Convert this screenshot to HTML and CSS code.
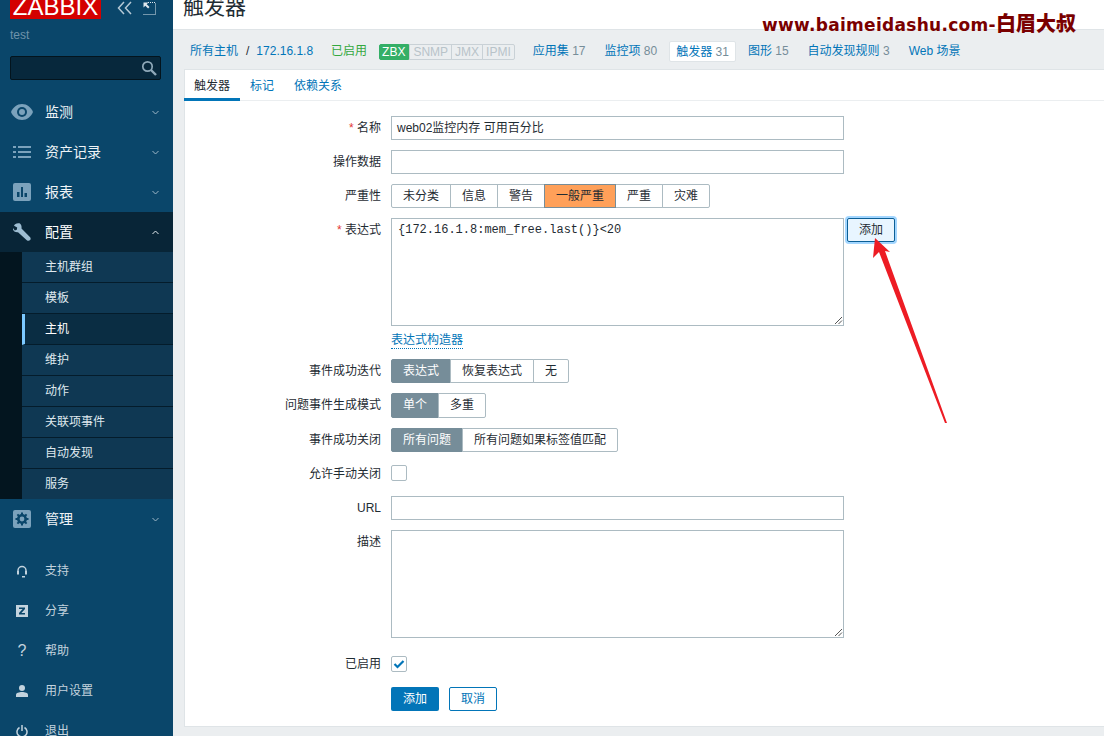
FILE: index.html
```html
<!DOCTYPE html>
<html lang="zh">
<head>
<meta charset="utf-8">
<title>触发器</title>
<link rel="stylesheet" href="styles.css">
</head>
<body>
<aside class="sidebar">
  <div class="brand">
    <div class="logo">ZABBIX</div>
    <svg class="ctl ctl-a" width="16" height="14" viewBox="0 0 16 14"><path d="M7 1 1.500 7 7 13M14 1 8.500 7 14 13" fill="none" stroke="#b5c9d6" stroke-width="1.500"/></svg>
    <svg class="ctl ctl-b" width="13" height="13" viewBox="0 0 13 13"><path d="M.5 12.500h12V.5" fill="none" stroke="#dfe8ee" stroke-dasharray="1 1"/><path d="M5 .5h7.500" stroke="#dfe8ee" stroke-dasharray="1 1"/><path d="M.5 .5h5l-1.800 1.800 2.800 2.800-1.400 1.400-2.800-2.800L.5 5.500z" fill="#dfe8ee"/></svg>
  </div>
  <div class="user">test</div>
  <div class="search">
    <svg width="16" height="16" viewBox="0 0 16 16"><circle cx="6.500" cy="6.500" r="4.700" fill="none" stroke="#8fa9b9" stroke-width="1.700"/><path d="m10 10 5 5" stroke="#8fa9b9" stroke-width="2.400"/></svg>
  </div>
  <nav class="menu">
    <div class="mi">
      <span class="ico"><svg width="22" height="16" viewBox="0 0 22 16"><path d="M11 0C6 0 2 3.500 0 8c2 4.500 6 8 11 8s9-3.500 11-8c-2-4.500-6-8-11-8z" fill="#7ba2bc"/><circle cx="11" cy="8" r="5" fill="#0a466a"/><circle cx="11" cy="8" r="3" fill="#7ba2bc"/></svg></span>
      <span class="ml">监测</span><svg class="chev" width="7" height="5" viewBox="0 0 7 5"><path d="m.5 1 3 3 3-3" fill="none" stroke="#9db6c6"/></svg>
    </div>
    <div class="mi">
      <span class="ico"><svg width="18" height="12" viewBox="0 0 18 12"><path d="M0 0h3v2H0zM5 0h13v2H5zM0 5h3v2H0zM5 5h13v2H5zM0 10h3v2H0zM5 10h13v2H5z" fill="#7ba2bc"/></svg></span>
      <span class="ml">资产记录</span><svg class="chev" width="7" height="5" viewBox="0 0 7 5"><path d="m.5 1 3 3 3-3" fill="none" stroke="#9db6c6"/></svg>
    </div>
    <div class="mi">
      <span class="ico"><svg width="18" height="18" viewBox="0 0 18 18"><rect width="18" height="18" rx="2" fill="#7ba2bc"/><path d="M4 9h2.500v5H4zM8 4h2v10H8zM11.500 10H14v4h-2.500z" fill="#0a466a"/></svg></span>
      <span class="ml">报表</span><svg class="chev" width="7" height="5" viewBox="0 0 7 5"><path d="m.5 1 3 3 3-3" fill="none" stroke="#9db6c6"/></svg>
    </div>
    <div class="mi mi-open">
      <span class="ico"><svg width="18" height="18" viewBox="0 0 18 18"><path d="M6.500.3C3.800-.3 1.600 1 1 2.700l3.200 1.900-.4 2.100-2 .9L0 5C-.5 7.500 1.500 9.500 5 9.200l8.800 8c1 .9 2.400.9 3.300-.1.800-.9.800-2.200-.2-3.100L8.500 5.500C8.800 3.300 8.300 1.200 6.500.3z" fill="#9dbdd2"/></svg></span>
      <span class="ml">配置</span><svg class="chev" width="7" height="5" viewBox="0 0 7 5"><path d="m.5 4 3-3 3 3" fill="none" stroke="#e4ecf1"/></svg>
    </div>
    <ul class="sub">
      <li>主机群组</li>
      <li>模板</li>
      <li class="on">主机</li>
      <li>维护</li>
      <li>动作</li>
      <li>关联项事件</li>
      <li>自动发现</li>
      <li>服务</li>
    </ul>
    <div class="mi">
      <span class="ico"><svg width="18" height="18" viewBox="0 0 18 18"><rect width="18" height="18" rx="2" fill="#7ba2bc"/><circle cx="9" cy="9" r="3.700" fill="none" stroke="#0a466a" stroke-width="2.600"/><path d="M9 2.500v2.500M9 13v2.500M2.500 9H5M13 9h2.500M4.400 4.400l1.800 1.800M11.800 11.800l1.800 1.800M13.600 4.400l-1.800 1.800M6.200 11.800l-1.800 1.800" stroke="#0a466a" stroke-width="2"/></svg></span>
      <span class="ml">管理</span><svg class="chev" width="7" height="5" viewBox="0 0 7 5"><path d="m.5 1 3 3 3-3" fill="none" stroke="#9db6c6"/></svg>
    </div>
  </nav>
  <div class="foot">
    <div class="fi"><span class="ico"><svg width="12" height="13" viewBox="0 0 12 13"><path d="M2 8V5.500a4 4 0 0 1 8 0V8" fill="none" stroke="#c3d3de" stroke-width="1.500"/><path d="M1 6h2v3.500H1zM9 6h2v3.500H9zM6 11h3v1.500H6z" fill="#c3d3de"/></svg></span>支持</div>
    <div class="fi"><span class="ico"><svg width="12" height="12" viewBox="0 0 12 12"><path fill-rule="evenodd" d="M0 0h12v12H0zM3 2.500V4h3.600L3 8v1.500h6V8H5.400L9 4V2.500z" fill="#c3d3de"/></svg></span>分享</div>
    <div class="fi"><span class="ico q">?</span>帮助</div>
    <div class="fi"><span class="ico"><svg width="12" height="12" viewBox="0 0 12 12"><circle cx="6" cy="3" r="3" fill="#c3d3de"/><path d="M0 12V9.800C0 8 3 7 6 7s6 1 6 2.800V12z" fill="#c3d3de"/></svg></span>用户设置</div>
    <div class="fi"><span class="ico"><svg width="12" height="13" viewBox="0 0 12 13"><path d="M3.500 2.500a5 5 0 1 0 5 0" fill="none" stroke="#c3d3de" stroke-width="1.500"/><path d="M6 0v6" stroke="#c3d3de" stroke-width="1.500"/></svg></span>退出</div>
  </div>
</aside>

<main class="main">
  <header class="head"><h1>触发器</h1></header>
  <div class="hostnav">
    <a class="crumb">所有主机</a><span class="sep">/</span><a class="crumb">172.16.1.8</a>
    <span class="status">已启用</span>
    <span class="avail"><b class="zbx">ZBX</b><i>SNMP</i><i>JMX</i><i>IPMI</i></span>
    <a class="hn hn-first">应用集 <em>17</em></a>
    <a class="hn">监控项 <em>80</em></a>
    <a class="hn hn-on">触发器 <em>31</em></a>
    <a class="hn">图形 <em>15</em></a>
    <a class="hn">自动发现规则 <em>3</em></a>
    <a class="hn">Web 场景</a>
  </div>
  <section class="card">
    <div class="tabs">
      <a class="tab tab-on">触发器</a>
      <a class="tab">标记</a>
      <a class="tab">依赖关系</a>
    </div>
    <form class="form">
      <label class="lb"><s>*</s> 名称</label>
      <div class="fd"><div class="inp">web02监控内存 可用百分比</div></div>

      <label class="lb">操作数据</label>
      <div class="fd"><div class="inp"></div></div>

      <label class="lb">严重性</label>
      <div class="fd"><div class="seg">
        <span>未分类</span><span>信息</span><span>警告</span><span class="sev">一般严重</span><span>严重</span><span>灾难</span>
      </div></div>

      <label class="lb"><s>*</s> 表达式</label>
      <div class="fd">
        <div class="expr-row">
          <div class="area mono">{172.16.1.8:mem_free.last()}&lt;20<svg class="grip" width="9" height="9" viewBox="0 0 9 9"><path d="M1 8 8 1M4.500 8 8 4.500" stroke="#555" fill="none"/></svg></div>
          <span class="btn-focus">添加</span>
        </div>
        <a class="builder">表达式构造器</a>
      </div>

      <label class="lb">事件成功迭代</label>
      <div class="fd"><div class="seg">
        <span class="sel">表达式</span><span>恢复表达式</span><span>无</span>
      </div></div>

      <label class="lb">问题事件生成模式</label>
      <div class="fd"><div class="seg seg-tall">
        <span class="sel">单个</span><span>多重</span>
      </div></div>

      <label class="lb">事件成功关闭</label>
      <div class="fd"><div class="seg">
        <span class="sel">所有问题</span><span>所有问题如果标签值匹配</span>
      </div></div>

      <label class="lb">允许手动关闭</label>
      <div class="fd fd-check"><span class="check"></span></div>

      <label class="lb">URL</label>
      <div class="fd"><div class="inp"></div></div>

      <label class="lb">描述</label>
      <div class="fd"><div class="area"><svg class="grip" width="9" height="9" viewBox="0 0 9 9"><path d="M1 8 8 1M4.500 8 8 4.500" stroke="#555" fill="none"/></svg></div></div>

      <label class="lb lb-en">已启用</label>
      <div class="fd fd-en"><span class="check"><svg width="14" height="14" viewBox="0 0 14 14"><path d="m2.500 7 3 3 6-6" fill="none" stroke="#0275b8" stroke-width="2.200"/></svg></span></div>

      <span></span>
      <div class="fd actions"><span class="btn">添加</span><span class="btn btn-alt">取消</span></div>
    </form>
  </section>
</main>

<div class="mark">www.baimeidashu.com-<span>白眉大叔</span></div>
<svg class="arrow" width="1104" height="736" viewBox="0 0 1104 736"><polygon points="875,238 890,252 885,251 947,423 945,423 879,252 873,258" fill="#ed1c24"/></svg>
</body>
</html>
```
FILE: styles.css
```css
* { box-sizing: border-box; }
html, body { margin: 0; padding: 0; height: 736px; overflow: hidden; }
body {
  display: flex;
  position: relative;
  background: #ebeef0;
  color: #1f2c33;
  font: 12px/16px "Liberation Sans", "Noto Sans CJK SC", sans-serif;
}

/* sidebar */
.sidebar { width: 173px; flex: none; height: 736px; background: #0a466a; overflow: hidden; }
.brand { display: flex; height: 19px; padding-left: 10px; }
.logo {
  width: 91px; height: 19px; overflow: hidden; background: #d40000; color: #fff;
  font-size: 24px; line-height: 13px; letter-spacing: 0; text-align: center;
}
.ctl { flex: none; }
.ctl-a { margin: 1px 0 0 16px; }
.ctl-b { margin: 2px 0 0 10px; }
.user { margin: 8px 0 0 10px; color: #6f93ab; height: 16px; }
.search {
  display: flex; align-items: center; justify-content: flex-end;
  width: 151px; height: 24px; margin: 13px 0 12px 10px; padding-right: 3px;
  background: #07283c; border: 1px solid #03141d; border-radius: 2px;
}
.menu { display: block; }
.mi { display: flex; align-items: center; height: 40px; padding: 0 14px 0 11px; color: #eef3f6; font-size: 14px; }
.mi-open { background: #082537; color: #fff; }
.ico { display: flex; align-items: center; justify-content: center; flex: none; width: 22px; margin-right: 12px; }
.ml { flex: 1; }
.chev { flex: none; }
.sub { list-style: none; margin: 0; padding: 0 0 0 22px; background: #03151f; height: 247px; color: #dfe8ee; }
.sub li { height: 31px; line-height: 29px; padding: 1px 0 0 23px; background: #0f3853; border-bottom: 1px solid #041c2b; }
.sub li:last-child { height: 30px; border-bottom: 0; }
.sub li.on { padding-left: 20px; border-left: 3px solid #7cc9ff; background: #0a2d43; color: #fff; }
.foot { margin-top: 12px; }
.fi { display: flex; align-items: center; height: 40px; padding-left: 11px; color: #c3d3de; }
.q { font-size: 16px; color: #c3d3de; }

/* main */
.main { flex: 1; min-width: 0; display: flex; flex-direction: column; height: 736px; }
.head { height: 30px; flex: none; background: #fff; border-bottom: 1px solid #dfe4e7; padding-left: 10px; }
h1 { margin: 0; font-size: 21px; font-weight: 400; line-height: 14px; color: #1f2c33; }
.hostnav { height: 39px; flex: none; display: flex; align-items: center; padding: 3px 0 0 17px; color: #0275b8; }
.crumb { color: #0275b8; }
.sep { margin: 0 7px 0 8px; color: #1f2c33; }
.status { margin: 0 12px 0 18px; color: #34a83f; }
.avail { display: flex; height: 16px; margin: 2px 11px 0 0; line-height: 15px; font-style: normal; }
.avail b { font-weight: 400; background: #34af67; color: #fff; padding: 0 3px 0 2px; border: 1px solid #34af67; border-radius: 2px 0 0 2px; }
.avail i { font-style: normal; color: #b8c3c9; background: #ebeef0; padding: 0 3px; border: 1px solid #c9d1d6; margin-left: -1px; }
.avail i:nth-child(2) { margin-left: 0; }
.avail i:last-child { border-radius: 0 2px 2px 0; }
.hn { display: block; height: 21px; line-height: 20px; padding: 0 7px; margin-right: 5px; color: #0275b8; border-radius: 2px; }
.hn em { font-style: normal; color: #768d99; }
.hn-on { background: #fff; border: 1px solid #dfe4e7; padding: 0 6px; }
.card { flex: none; height: 658px; margin-left: 11px; background: #fff; border: solid #dfe4e7; border-width: 1px 0 1px 1px; }
.tabs { display: flex; height: 31px; border-bottom: 1px solid #ebeef0; margin-left: -1px; }
.tab { display: block; height: 30px; line-height: 28px; padding: 2px 10px 0; color: #0275b8; }
.tab-on { height: 31px; color: #1f2c33; border-bottom: 3px solid #0275b8; }

/* form */
.form { display: grid; grid-template-columns: 197px 1fr; column-gap: 10px; row-gap: 10px; padding-top: 15px; margin-left: -1px; align-items: start; }
.lb { display: block; text-align: right; line-height: 24px; white-space: nowrap; }
.lb s { text-decoration: none; color: #e33734; }
.fd { min-height: 24px; }
.inp { width: 453px; height: 24px; line-height: 22px; padding: 0 5px; border: 1px solid #acbbc2; background: #fff; }
.area { position: relative; width: 453px; height: 108px; padding: 4px 6px; border: 1px solid #acbbc2; background: #fff; }
.mono { font-family: "Liberation Mono", monospace; font-size: 12px; line-height: 14px; }
.grip { position: absolute; right: 0; bottom: 0; }
.expr-row { display: flex; align-items: flex-start; }
.btn-focus {
  display: block; width: 48px; height: 24px; margin-left: 3px; line-height: 22px; text-align: center;
  background: #e8f5ff; border: 1px solid #0b5f96; border-radius: 2px; box-shadow: 0 0 0 2px #a3d6ff;
}
.builder { display: inline-block; margin-top: 7px; height: 16px; color: #0275b8; line-height: 15px; border-bottom: 1px dotted #0275b8; vertical-align: top; }
.seg { display: flex; height: 24px; }
.seg span { display: block; height: 24px; line-height: 22px; padding: 0 11px; margin-left: -1px; background: #fff; border: 1px solid #acbbc2; }
.seg span:first-child { margin-left: 0; border-radius: 2px 0 0 2px; }
.seg span:last-child { border-radius: 0 2px 2px 0; }
.seg .sev { background: #ffa059; border-color: #768d99; position: relative; }
.seg .sel { background: #768d99; border-color: #768d99; color: #fff; }
.seg-tall { height: 25px; }
.seg-tall span { height: 25px; line-height: 23px; }
.fd-check { padding-top: 3px; }
.check { display: block; width: 16px; height: 16px; background: #fff; border: 1px solid #acbbc2; border-radius: 2px; }
.check svg { display: block; margin: 0; }
.lb-en { padding-top: 4px; }
.fd-en { padding-top: 8px; height: 29px; }
.actions { display: flex; gap: 10px; }
.btn { display: block; width: 48px; height: 24px; line-height: 24px; text-align: center; background: #0275b8; color: #fff; border-radius: 2px; }
.btn-alt { line-height: 22px; background: #fff; color: #0275b8; border: 1px solid #0275b8; }

/* overlays on the screenshot */
.mark {
  position: absolute; left: 762px; top: 12px; white-space: nowrap;
  font: 700 17px/22px "DejaVu Sans", sans-serif; color: #7a0000; letter-spacing: .3px;
}
.mark span { font-family: "Noto Sans CJK SC", sans-serif; font-size: 20px; font-weight: 900; letter-spacing: 0; }
.arrow { position: absolute; left: 0; top: 0; pointer-events: none; }
```
